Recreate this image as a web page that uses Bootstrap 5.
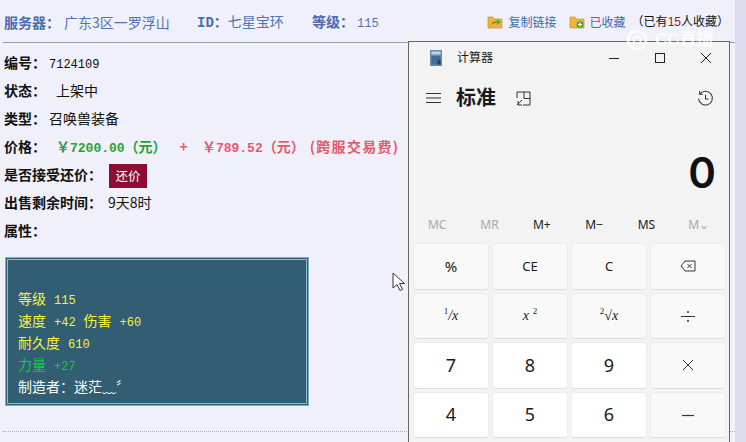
<!DOCTYPE html>
<html lang="zh"><head><meta charset="utf-8"><title>计算器</title>
<link href="https://cdn.jsdelivr.net/npm/bootstrap@5.3.0/dist/css/bootstrap.min.css" rel="stylesheet">
<style>
html,body{height:100%;overflow:hidden}
body{background:#dcdcee;font-family:"Noto Sans CJK SC","Liberation Sans",sans-serif;font-size:14px;color:#111}
.pagearea{width:735px;height:442px;background:#eff0fa;position:relative;overflow:hidden}
.headrow{height:43px;margin-left:3px;padding:2px 0 0 1px;border-bottom:1px solid #9a9aa8;color:#4f74b4;font-size:14px}
.headrow b{color:#4c6cae}
.mono{font-family:"Liberation Mono","Noto Sans CJK SC",monospace}
.num12{font-family:"Liberation Mono",monospace;font-size:12px}
.headlinks{color:#3d6ab0;font-size:12px;line-height:14px}
.headlinks .plain{color:#111;font-size:12px;font-family:"Liberation Sans","Noto Sans CJK SC",sans-serif}
.headlinks .plain i{font-style:normal;color:#a01030}
.infolist{padding:6px 0 0 4px}
.inforow{height:28px;line-height:27px;font-size:14px;white-space:nowrap}
.inforow b{font-weight:700}
.pgreen{color:#1fa33c;font-weight:700;margin-left:10px}
.pred{color:#e35a6c;font-weight:700}
.plus{margin:0 14px 0 13px}
.feetext{margin-left:5px;letter-spacing:1.3px}
.dg{font-family:"Liberation Mono",monospace;font-size:13px}
.gapv{margin-left:10px}
.gaps{margin-left:6px}
.offerbtn{display:inline-block;background:#8c0c34;color:#fff;width:38px;height:24px;line-height:24px;text-align:center;font-size:12.5px;vertical-align:middle;margin-left:7px}
.attrbox{width:304px;height:149px;margin:12px 0 0 5px;background:#315e73;border:1px solid #7fb0c6;outline:1px solid #8fb9cc;outline-offset:-3px;padding:29px 0 0 12px;font-size:14px;line-height:22px;color:#fff}
.attrbox div{height:22px}
.attrbox .num12{margin:0 8px}
.attrbox .yl{color:#f4f43a}
.attrbox .gn{color:#17c83c}
.dotline{border-top:1px dotted #aaa;margin:25px 0 0 3px}
.calcwin{position:absolute;left:408px;top:41px;width:322px;height:420px;background:#f3f3f3;border:1px solid #666;border-bottom:0;font-family:"Noto Sans","Noto Sans CJK SC",sans-serif;color:#1a1a1a}
.calctitle{height:32px;padding-left:21px;font-size:12px}
.calctitle .apptitle{margin-left:15px}
.wincontrols span{width:46px;display:flex;justify-content:center}
.calcmode{height:48px;padding-left:17px}
.calcmode .modetitle{font-size:20px;font-weight:700;margin-left:15px;line-height:1}
.calcdisplay{height:85px;padding:0 13px 13px 0;font-size:42px;font-weight:600;line-height:1;display:flex;align-items:flex-end;justify-content:flex-end;font-family:"Inter","Noto Sans",sans-serif;color:#111}
.memrow{height:36px;padding:0 4px 0 2px;font-size:12px}
.memrow span{flex:1;text-align:center}
.memrow .off{color:#a9a9a9}
.keygrid{display:grid;grid-template-columns:repeat(4,76px);gap:3px;padding:0 0 0 4px;grid-auto-rows:46.5px}
.calckey{background:#f9f9f9;border:1px solid #ececec;border-bottom-color:#dedede;border-radius:4px;display:flex;align-items:center;justify-content:center;font-size:13px}
.calckey.num{background:#fff;font-size:18px}
.calckey.sym{font-size:14px;font-family:"Liberation Serif",serif;font-style:italic}
.calckey.sym sup{font-size:9px;font-style:normal;top:-.5em}
.calckey.pct{font-size:15px}
.cursorpic{position:absolute;left:392px;top:272px}
.wmark{position:absolute;left:625px;top:30px;color:#fff;font-size:17px;opacity:.8;font-weight:700;line-height:20px;font-family:"Liberation Sans","Noto Sans CJK SC",sans-serif}
</style></head>
<body>
<div class="pagearea">
  <div class="headrow d-flex align-items-center">
    <span style="width:193px"><b>服务器：</b><span class="ms-1">广东3区一罗浮山</span></span>
    <span style="width:115px"><b class="mono">ID：</b>七星宝环</span>
    <span><b>等级：</b><span class="num12" style="margin-left:3px">115</span></span>
    <div class="headlinks d-flex align-items-center ms-auto">
      <svg width="16" height="14" viewBox="0 0 16 14"><path d="M1 2h5l1 2h8v9H1z" fill="#efb43c" stroke="#c8862a" stroke-width=".6"/><path d="M4 10q1-4 6-4V4l4 3-4 3V8q-3 0-6 2z" fill="#5aa83a"/></svg>
      <span style="margin-left:6px">复制链接</span>
      <svg style="margin-left:12px" width="16" height="14" viewBox="0 0 16 14"><path d="M1 2h5l1 2h8v9H1z" fill="#efb43c" stroke="#c8862a" stroke-width=".6"/><circle cx="11" cy="9.500" r="3.500" fill="#4ea83a"/><path d="M9 9.500h4M11 7.500v4" stroke="#fff" stroke-width="1.200"/></svg>
      <span style="margin-left:5px">已收藏</span>
      <span class="plain" style="margin-left:6px;margin-right:6px">（已有<i>15</i>人收藏）</span>
    </div>
  </div>
  <div class="infolist">
    <div class="inforow"><b>编号：</b><span class="num12 gaps" style="margin-left:3px">7124109</span></div>
    <div class="inforow"><b>状态：</b><span class="gapv">上架中</span></div>
    <div class="inforow"><b>类型：</b><span style="margin-left:3px">召唤兽装备</span></div>
    <div class="inforow"><b>价格：</b><span class="pgreen">￥<span class="dg">7200.00</span>（元）</span><span class="pred plus">+</span><span class="pred">￥<span class="dg">789.52</span>（元）<span class="feetext">(跨服交易费)</span></span></div>
    <div class="inforow"><b>是否接受还价：</b><span class="offerbtn">还价</span></div>
    <div class="inforow"><b>出售剩余时间：</b><span class="gaps">9天8时</span></div>
    <div class="inforow"><b>属性：</b></div>
  </div>
  <div class="attrbox">
    <div class="yl">等级<span class="num12">115</span></div>
    <div class="yl">速度<span class="num12">+42</span>伤害<span class="num12">+60</span></div>
    <div class="yl">耐久度<span class="num12">610</span></div>
    <div class="gn">力量<span class="num12">+27</span></div>
    <div>制造者：迷茫﹏〞</div>
  </div>
  <div class="dotline"></div>
  <svg class="cursorpic" width="14" height="20" viewBox="0 0 14 20"><path d="M1 1v15l4-3.500 3 6 2.500-1.200-3-5.800h5z" fill="#fff" stroke="#333"/></svg>
  <div class="calcwin">
    <div class="calctitle d-flex align-items-center">
      <svg width="12" height="16" viewBox="0 0 12 16"><rect width="12" height="16" fill="#6b8ca8"/><rect x="1.500" y="1.500" width="9" height="3" fill="#b9d4e6"/><rect x="1.500" y="6" width="9" height="8.500" fill="#3f6f96"/><rect x="7.500" y="10" width="3" height="4.500" fill="#203f66"/></svg>
      <span class="apptitle">计算器</span>
      <div class="wincontrols d-flex align-items-center ms-auto">
        <span><svg width="12" height="12"><path d="M1 6.500h10" stroke="#222"/></svg></span>
        <span><svg width="12" height="12"><rect x="1.500" y="1.500" width="9" height="9" fill="none" stroke="#222"/></svg></span>
        <span><svg width="12" height="12"><path d="M1 1l10 10M11 1L1 11" stroke="#222"/></svg></span>
      </div>
    </div>
    <div class="calcmode d-flex align-items-center">
      <svg width="15" height="12"><path d="M0 1.500h15M0 6h15M0 10.500h15" stroke="#333"/></svg>
      <span class="modetitle">标准</span>
      <svg style="margin-left:20px" width="15" height="15" viewBox="0 0 15 15"><path d="M1 7V1h13v13H7M8 1v6.500h6M1 14l5-5M2 10v4h4" fill="none" stroke="#333"/></svg>
      <svg class="ms-auto" style="margin-right:15px" width="17" height="17" viewBox="0 0 16 16"><path d="M3 3.500a6.500 6.500 0 1 1-1.500 4.500M2.500 1v3h3M8 4.500V8.500h3" fill="none" stroke="#333"/></svg>
    </div>
    <div class="calcdisplay"><span>0</span></div>
    <div class="memrow d-flex align-items-center">
      <span class="off">MC</span><span class="off">MR</span><span>M+</span><span>M−</span><span>MS</span><span class="off">M⌄</span>
    </div>
    <div class="keygrid">
      <div class="calckey pct">%</div><div class="calckey">CE</div><div class="calckey">C</div>
      <div class="calckey"><svg width="16" height="12" viewBox="0 0 16 12"><path d="M5 1h10v10H5L1 6zM7.500 4l4 4M11.500 4l-4 4" fill="none" stroke="#333"/></svg></div>
      <div class="calckey sym"><sup>1</sup>/x</div><div class="calckey sym">x<sup class="ms-1">2</sup></div><div class="calckey sym"><sup>2</sup>√x</div>
      <div class="calckey"><svg width="14" height="12"><path d="M0 6.500h14" stroke="#333"/><circle cx="7" cy="2" r="1" fill="#333"/><circle cx="7" cy="11" r="1" fill="#333"/></svg></div>
      <div class="calckey num">7</div><div class="calckey num">8</div><div class="calckey num">9</div>
      <div class="calckey"><svg width="12" height="12"><path d="M1 1l10 10M11 1L1 11" stroke="#333"/></svg></div>
      <div class="calckey num">4</div><div class="calckey num">5</div><div class="calckey num">6</div>
      <div class="calckey"><svg width="12" height="12"><path d="M0 6.500h12" stroke="#333" stroke-width="1.200"/></svg></div>
    </div>
  </div>
  <div class="wmark d-flex align-items-center"><svg width="26" height="20" viewBox="0 0 26 22"><circle cx="12" cy="11" r="10" fill="none" stroke="#fff" stroke-width="3"/><circle cx="12" cy="11" r="4" fill="none" stroke="#fff" stroke-width="2"/></svg><span class="ms-1">CC直播</span></div>
</div>
<script src="https://cdn.jsdelivr.net/npm/bootstrap@5.3.0/dist/js/bootstrap.bundle.min.js"></script>
</body></html>
